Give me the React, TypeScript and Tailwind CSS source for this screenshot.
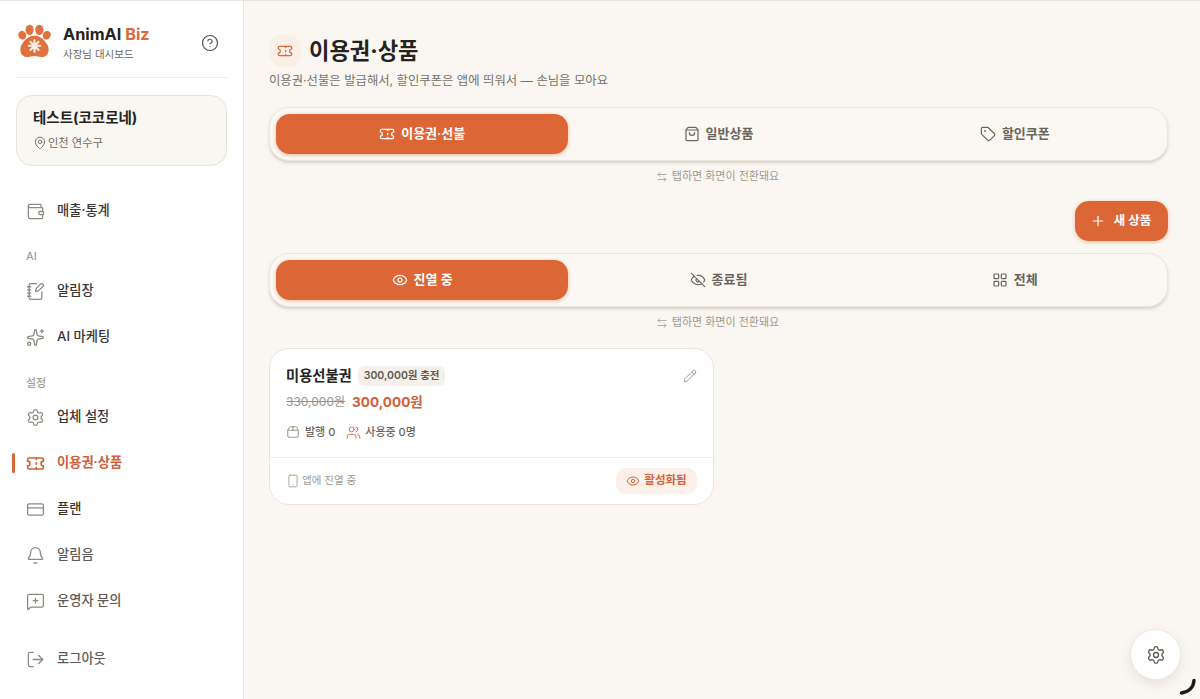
import { ArrowLeftRight, Bell, CircleHelp, CreditCard, Eye, EyeOff, LayoutGrid, LogOut, MapPin, MessageSquarePlus, NotebookPen, Package2, Pencil, Plus, Settings, ShoppingBag, Smartphone, Sparkles, Tag, Ticket, Users, Wallet } from 'lucide-react';

const font = { fontFamily: 'Inter, "Noto Sans CJK KR", sans-serif' };

function PawLogo() {
  return (
    <svg width="33" height="34" viewBox="0 0 34 34" className="shrink-0">
      <g fill="#e0703f">
        <ellipse cx="4.400" cy="11" rx="4" ry="4.600" transform="rotate(-25 4.400 11)" />
        <ellipse cx="12" cy="5.500" rx="4.200" ry="5.300" />
        <ellipse cx="22" cy="5.500" rx="4.200" ry="5.300" />
        <ellipse cx="29.600" cy="11" rx="4" ry="4.600" transform="rotate(25 29.600 11)" />
        <path d="M17 11.500c6.500 0 10.500 4.500 13.500 9.500 2.600 5.500.5 12-5.500 12.500-3 .3-5.500-1-8-1s-5 1.300-8 1c-6-.5-8.100-7-5.500-12.500 3-5 7-9.500 13.500-9.500Z" />
      </g>
      <g stroke="#fbeee4" strokeWidth="2.100" strokeLinecap="round">
        <path d="M17 16v12M11 22h12M12.800 17.800l8.400 8.400M21.200 17.800l-8.400 8.400" />
      </g>
    </svg>
  );
}

function NavItem({ icon: Icon, label, active, muted }: { icon: any; label: string; active?: boolean; muted?: boolean }) {
  return (
    <div className="relative h-[46px] flex items-center gap-3 pl-[26px]">
      {active && <span className="absolute left-3 top-[13px] w-[3px] h-5 rounded-full bg-[#d9643a]" />}
      <Icon className={active ? 'w-[19px] h-[19px] text-[#cf6039]' : 'w-[19px] h-[19px] text-[#8f8a80]'} strokeWidth={active ? 2 : 1.6} />
      <span className={active ? 'text-[13.250px] font-semibold text-[#cf6039]' : muted ? 'text-[13.250px] font-medium text-[#5f5b54]' : 'text-[13.250px] font-medium text-[#3a3733]'}>{label}</span>
    </div>
  );
}

function Tabs({ items }: { items: { icon: any; label: string; active?: boolean }[] }) {
  return (
    <div className="h-[54px] rounded-[20px] border border-[#ece7de] bg-[#fbf8f3] p-1.5 grid grid-cols-3 gap-1 shadow-[0_2px_3px_rgba(120,105,85,0.25)]">
      {items.map(({ icon: Icon, label, active }) => (
        <div key={label} className={active
          ? 'flex items-center justify-center gap-1.5 rounded-[14px] bg-[#dd6637] text-white text-[13px] font-semibold shadow-[0_1px_4px_rgba(221,102,55,0.4)]'
          : 'flex items-center justify-center gap-1.5 rounded-[14px] text-[#6a655c] text-[13px] font-semibold'}>
          <Icon className="w-4 h-4" strokeWidth={1.8} />
          <span>{label}</span>
        </div>
      ))}
    </div>
  );
}

function SwitchHint() {
  return (
    <div className="h-[29px] pt-0.5 pr-0.5 flex items-center justify-center gap-1 text-[11px] text-[#a09a8f]">
      <ArrowLeftRight className="w-3 h-3" strokeWidth={1.6} />
      <span>탭하면 화면이 전환돼요</span>
    </div>
  );
}

export default function App() {
  return (
    <div style={font} className="h-[699px] w-[1200px] overflow-hidden flex relative bg-[#faf7f2] border-t border-[#e9e6e0]">
      {/* SIDEBAR */}
      <aside className="w-[244px] shrink-0 bg-white border-r border-[#ebe7e0] px-4 flex flex-col">
        <div className="h-[77px] pt-[23px] pl-0.5 flex items-start gap-[12px] border-b border-[#f0ece5]">
          <PawLogo />
          <div className="flex-1">
            <div className="text-[16.300px] leading-[20px] font-bold text-[#26231f]">AnimAI <span className="text-[#d9683c]">Biz</span></div>
            <div className="text-[10.500px] leading-4 mt-[3px] text-[#6b665e]">사장님 대시보드</div>
          </div>
          <CircleHelp className="w-[18px] h-[18px] mt-2.5 mr-2 text-[#57534c]" strokeWidth={1.6} />
        </div>
        <div className="mt-[17px] h-[71px] rounded-2xl border border-[#e9e4da] bg-[#f9f7f2] px-4 pt-3">
          <div className="text-[14.500px] leading-5 font-bold text-[#26231f]">테스트(코코로네)</div>
          <div className="mt-[7px] flex items-center gap-px text-[11.250px] leading-4 text-[#6f6a61]">
            <MapPin className="w-3.5 h-3.5" strokeWidth={1.6} />
            <span>인천 연수구</span>
          </div>
        </div>
        <nav className="-mx-4 mt-[22px] flex flex-col">
          <NavItem icon={Wallet} label="매출·통계" />
          <div className="h-[34px] pl-[26px] pt-[14px] text-[11px] leading-4 font-medium text-[#a29d93]">AI</div>
          <NavItem icon={NotebookPen} label="알림장" />
          <NavItem icon={Sparkles} label="AI 마케팅" />
          <div className="h-[34px] pl-[26px] pt-[15px] text-[11px] leading-4 font-medium text-[#a29d93]">설정</div>
          <NavItem icon={Settings} label="업체 설정" />
          <NavItem icon={Ticket} label="이용권·상품" active />
          <NavItem icon={CreditCard} label="플랜" />
          <NavItem icon={Bell} label="알림음" muted />
          <NavItem icon={MessageSquarePlus} label="운영자 문의" muted />
          <div className="h-3" />
          <NavItem icon={LogOut} label="로그아웃" muted />
        </nav>
      </aside>

      {/* MAIN */}
      <main className="flex-1 pl-[25px] pr-8 flex flex-col">
        <div className="mt-[34px] h-8 flex items-center gap-2">
          <div className="w-8 h-8 rounded-xl bg-[#fbf0e8] flex items-center justify-center">
            <Ticket className="w-4 h-4 text-[#d9683c]" strokeWidth={1.8} />
          </div>
          <h1 className="text-[22.200px] font-bold text-[#26231f]">이용권·상품</h1>
        </div>
        <p className="mt-1 h-5 text-[12.350px] leading-5 text-[#77726a]">이용권·선불은 발급해서, 할인쿠폰은 앱에 띄워서 — 손님을 모아요</p>

        <div className="mt-4">
          <Tabs items={[
            { icon: Ticket, label: '이용권·선불', active: true },
            { icon: ShoppingBag, label: '일반상품' },
            { icon: Tag, label: '할인쿠폰' },
          ]} />
        </div>
        <SwitchHint />

        <div className="mt-[11px] flex justify-end">
          <button className="h-10 w-[93px] rounded-[14px] bg-[#dd6637] text-white text-[12.500px] font-semibold flex items-center justify-center gap-1.5 pr-0.5 shadow-[0_1px_4px_rgba(221,102,55,0.4)]">
            <Plus className="w-4 h-4" strokeWidth={1.8} />
            <span className="ml-0.5">새 상품</span>
          </button>
        </div>

        <div className="mt-3">
          <Tabs items={[
            { icon: Eye, label: '진열 중', active: true },
            { icon: EyeOff, label: '종료됨' },
            { icon: LayoutGrid, label: '전체' },
          ]} />
        </div>
        <SwitchHint />

        {/* PRODUCT CARD */}
        <div className="mt-[12px] w-[445px] h-[157px] rounded-[20px] border border-[#ebe6dc] bg-white flex flex-col">
          <div className="flex-1 px-4 pt-[17px]">
            <div className="flex items-center h-5">
              <span className="text-[14.300px] font-bold text-[#26231f]">미용선불권</span>
              <span className="ml-1.5 h-5 px-1.5 rounded-md bg-[#f5f1ea] text-[10.500px] leading-5 font-semibold text-[#5f5a52]">300,000원 충전</span>
              <Pencil className="ml-auto w-[14px] h-[14px] text-[#8f8a80]" strokeWidth={1.5} />
            </div>
            <div className="mt-1 flex items-center gap-[7px] h-6">
              <span className="text-[12px] text-[#98938a] line-through">330,000원</span>
              <span className="text-[13.600px] font-bold text-[#cf6039]">300,000원</span>
            </div>
            <div className="mt-[9px] flex items-center h-[18px] text-[11px] font-medium text-[#6a655c]">
              <Package2 className="w-[14px] h-[14px] text-[#8f8a80] mr-[5px]" strokeWidth={1.5} />
              <span>발행 0</span>
              <Users className="w-[15px] h-[15px] text-[#d9683c] ml-[11px] mr-[4px]" strokeWidth={1.5} />
              <span>사용중 0명</span>
            </div>
          </div>
          <div className="h-[47px] border-t border-[#f0ece5] px-4 flex items-center justify-between">
            <div className="flex items-center gap-[2px] text-[10.500px] text-[#a09a8f]">
              <Smartphone className="w-[14px] h-[14px]" strokeWidth={1.5} />
              <span>앱에 진열 중</span>
            </div>
            <div className="h-[26px] w-[81px] rounded-[10px] bg-[#fbf1ea] flex items-center justify-center gap-1 text-[11.500px] font-semibold text-[#d2633a]">
              <Eye className="w-[14px] h-[14px]" strokeWidth={1.7} />
              <span>활성화됨</span>
            </div>
          </div>
        </div>
      </main>

      {/* FLOATING SETTINGS */}
      <button className="absolute left-[1130px] top-[628px] w-[51px] h-[51px] rounded-full bg-white border border-[#eee9e1] shadow-[0_4px_12px_rgba(90,75,55,0.12)] flex items-center justify-center">
        <Settings className="w-5 h-5 text-[#5f5a52]" strokeWidth={1.6} />
      </button>
      <svg className="absolute left-[1178px] top-[677px]" width="20" height="20" viewBox="0 0 20 20" fill="none">
        <path d="M16 2.500C15.500 9 11 14 3.500 15" stroke="#1c1b1a" strokeWidth="3.400" strokeLinecap="round" />
      </svg>
    </div>
  );
}
